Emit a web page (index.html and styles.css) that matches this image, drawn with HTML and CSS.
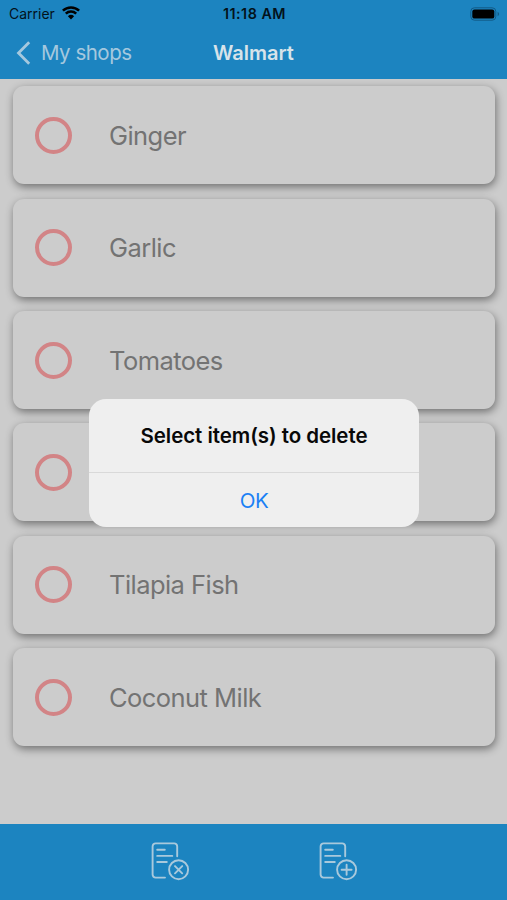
FILE: index.html
```html
<!DOCTYPE html>
<html lang="en">
<head>
<meta charset="utf-8">
<title>Walmart</title>
<link rel="stylesheet" href="styles.css">
</head>
<body>
<div class="screen">
  <header class="header">
    <div class="status">
      <div class="carrier">
        <span>Carrier</span>
        <svg class="wifi" viewBox="0 0 18 14" width="18" height="14">
          <path d="M.9 4.7a11.6 11.6 0 0 1 16.2 0M3.8 7.7a7.5 7.5 0 0 1 10.4 0" fill="none" stroke="#000" stroke-width="2.5"/>
          <path d="M5.9 10.3a4.5 4.5 0 0 1 6.2 0L9 13.4z"/>
        </svg>
      </div>
      <span class="time">11:18 AM</span>
      <svg class="battery" viewBox="0 0 30 14" width="30" height="14">
        <rect x=".8" y=".8" width="25" height="12.4" rx="3.6" fill="none" stroke="#125a86" stroke-width="1"/>
        <rect x="2.3" y="2.4" width="22" height="9.2" rx="2.2"/>
        <path d="M27.6 4.8q1.5.7 1.5 2.2t-1.5 2.2z" fill="#125a86"/>
      </svg>
    </div>
    <nav class="nav">
      <a class="back">
        <svg viewBox="0 0 16 24" width="16" height="24"><path d="M13.2 1.2 2.5 12l10.7 10.8" fill="none" stroke="currentColor" stroke-width="2.8"/></svg>
        <span>My shops</span>
      </a>
      <h1 class="title">Walmart</h1>
    </nav>
  </header>
  <main class="list">
    <div class="card"><span class="ring"></span><span class="name">Ginger</span></div>
    <div class="card"><span class="ring"></span><span class="name">Garlic</span></div>
    <div class="card"><span class="ring"></span><span class="name">Tomatoes</span></div>
    <div class="card"><span class="ring"></span></div>
    <div class="card"><span class="ring"></span><span class="name">Tilapia Fish</span></div>
    <div class="card"><span class="ring"></span><span class="name">Coconut Milk</span></div>
  </main>
  <footer class="toolbar">
    <svg class="tool" viewBox="0 0 40 40" width="40" height="40">
      <path d="M15 36.6H5.6a3 3 0 0 1-3-3V5.4a3 3 0 0 1 3-3h18.6a3 3 0 0 1 3 3V15.2M7.2 8.7h7.6M7.2 14.9h15.1M7.2 21h9.6"/>
      <circle cx="28.6" cy="28.7" r="9.5"/>
      <path d="m25 25.1 7.2 7.2m0-7.2L25 32.3"/>
    </svg>
    <svg class="tool" viewBox="0 0 40 40" width="40" height="40">
      <path d="M15 36.6H5.6a3 3 0 0 1-3-3V5.4a3 3 0 0 1 3-3h18.6a3 3 0 0 1 3 3V15.2M7.2 8.7h7.6M7.2 14.9h15.1M7.2 21h9.6"/>
      <circle cx="28.6" cy="28.7" r="9.5"/>
      <path d="M28.6 23.7v10M23.6 28.7h10"/>
    </svg>
  </footer>
  <div class="dialog">
    <div class="message"><span>Select item(s) to delete</span></div>
    <div class="action"><span>OK</span></div>
  </div>
</div>
</body>
</html>
```
FILE: styles.css
```css
* { box-sizing: border-box; }
body { margin: 0; font-family: Inter, "Liberation Sans", sans-serif; }
.screen {
  position: relative;
  width: 507px;
  height: 900px;
  overflow: hidden;
  display: flex;
  flex-direction: column;
  background: #ccc;
}
.header { height: 79.3px; background: #1c84c0; flex: none; }
.status {
  height: 27px;
  display: grid;
  grid-template-columns: 1fr auto 1fr;
  align-items: center;
  padding: 0 7px 0 9px;
  color: #03121b;
  font-size: 14px;
}
.carrier { display: flex; align-items: center; gap: 7px; letter-spacing: 0; }
.wifi { margin-top: -2px; }
.time { font-weight: 600; font-size: 14.3px; letter-spacing: 0.5px; }
.battery { justify-self: end; }
.nav {
  height: 51px;
  display: grid;
  grid-template-columns: 1fr auto 1fr;
  align-items: center;
  padding: 0 16px;
}
.back { display: flex; align-items: center; gap: 9px; color: #a5c8de; font-size: 20.5px; letter-spacing: -0.5px; }
.title { margin: 0; font-size: 20px; font-weight: 600; color: #d7e3ea; }
.list {
  flex: 1;
  display: flex;
  flex-direction: column;
  gap: 14.4px;
  padding: 7px 12px 0 13px;
}
.card {
  height: 98px;
  flex: none;
  display: flex;
  align-items: center;
  gap: 37px;
  padding-left: 22px;
  border-radius: 11px;
  background: #ccc;
  box-shadow: 1px 3px 8px rgba(0, 0, 0, 0.45);
}
.ring { width: 37px; height: 37px; border: 4px solid #d28486; border-radius: 50%; }
.name { font-size: 25.5px; color: #737373; letter-spacing: -0.55px; }
.toolbar {
  height: 75.6px;
  flex: none;
  display: flex;
  gap: 128px;
  padding: 16.5px 0 0 149.5px;
  background: #1c84c0;
}
.tool { fill: none; stroke: #a9c9dc; stroke-width: 1.9; stroke-linecap: round; stroke-linejoin: round; }
.dialog {
  position: absolute;
  left: 89px;
  top: 399px;
  width: 330px;
  height: 128px;
  border-radius: 17px;
  background: #efefef;
  text-align: center;
}
.message {
  height: 74px;
  line-height: 74px;
  border-bottom: 1px solid #d9d9d9;
  font-size: 20.5px;
  font-weight: 600;
  letter-spacing: -0.05px;
  color: #080808;
}
.action { line-height: 55px; font-size: 20.5px; letter-spacing: -0.4px; color: #1b80f5; }
```
